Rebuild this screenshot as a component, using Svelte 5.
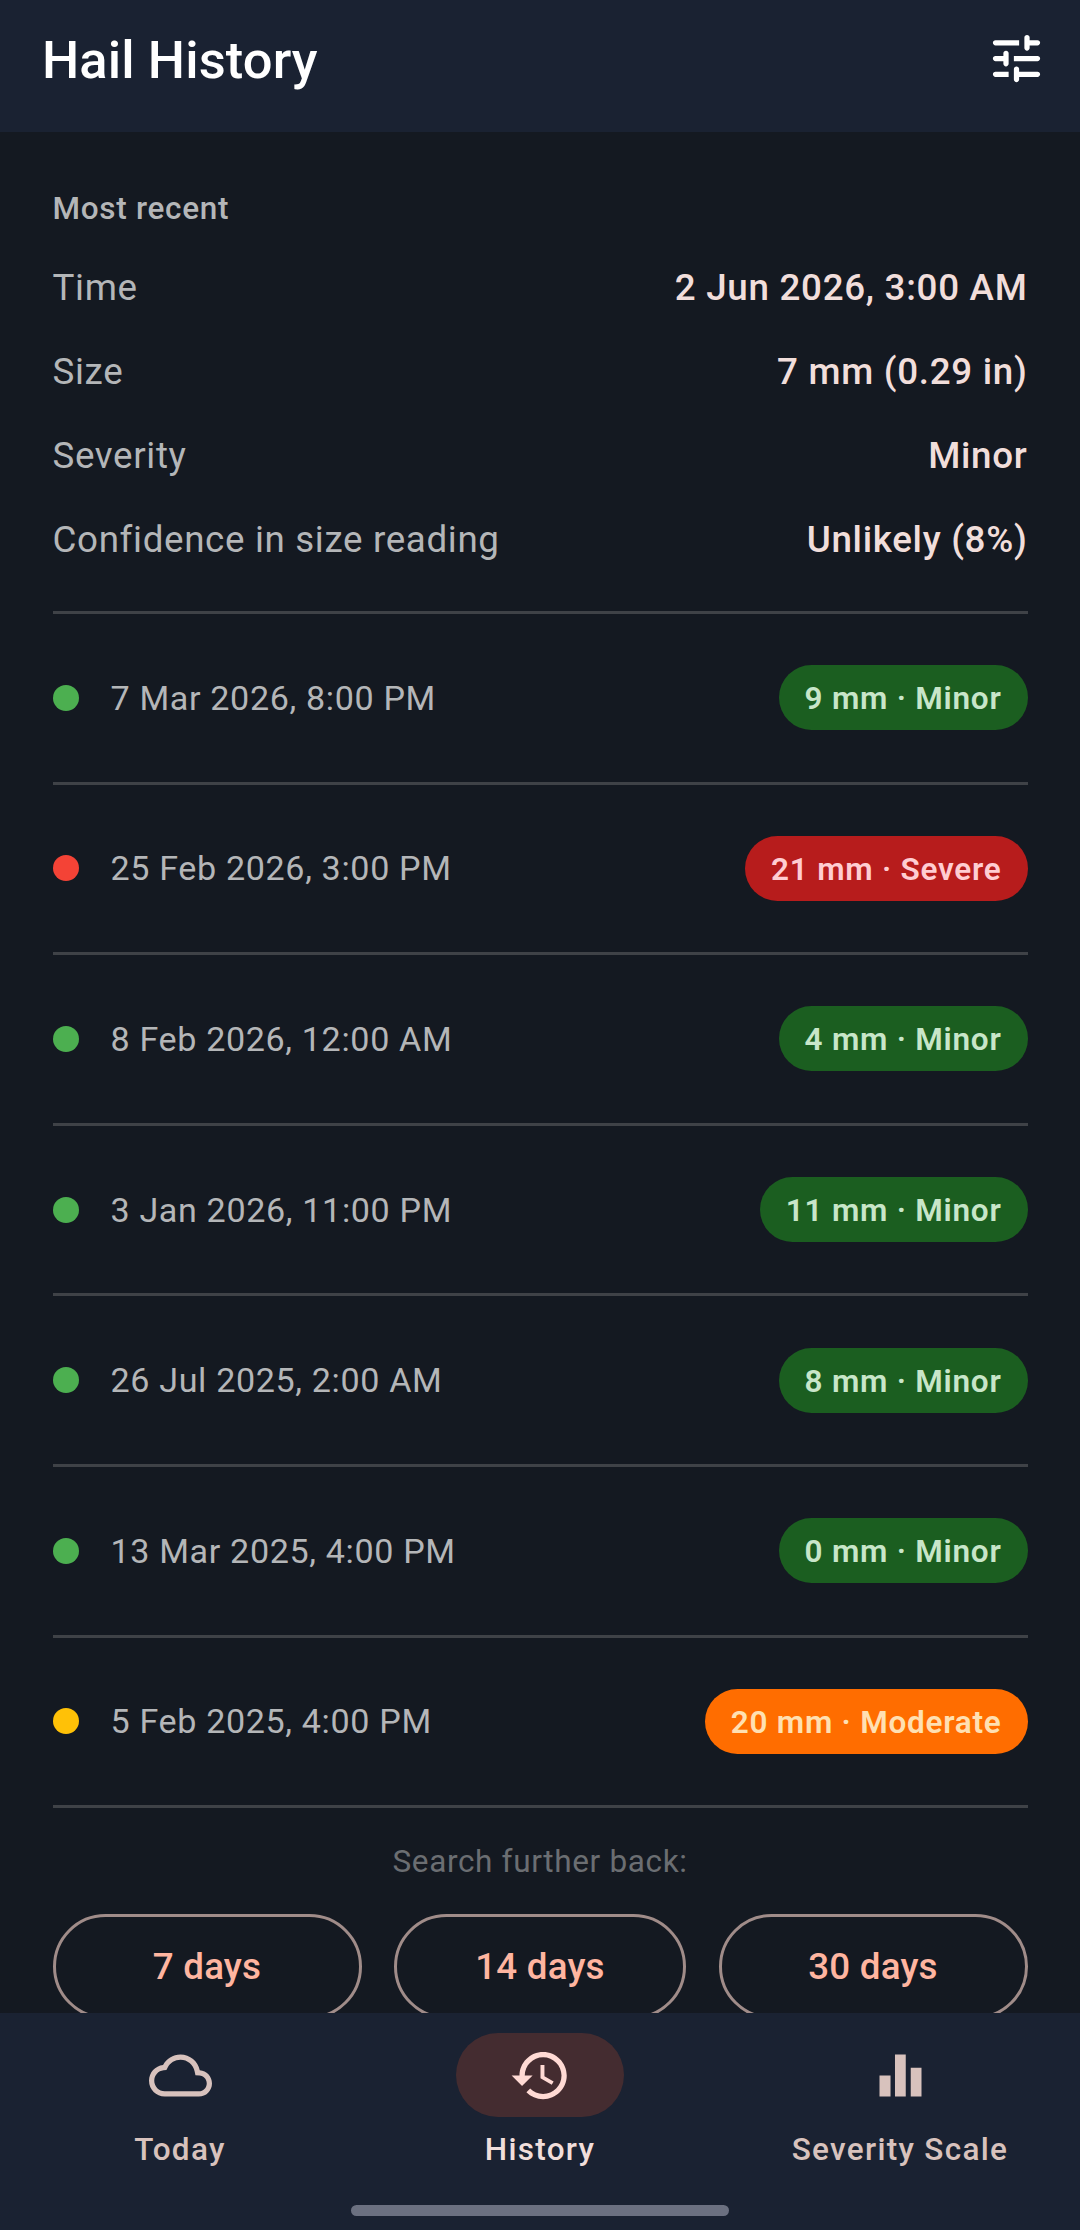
<script>
    const recent = [
        { label: 'Time', value: '2 Jun 2026, 3:00 AM' },
        { label: 'Size', value: '7 mm (0.29 in)' },
        { label: 'Severity', value: 'Minor' },
        { label: 'Confidence in size reading', value: 'Unlikely (8%)' }
    ];
    const events = [
        { date: '7 Mar 2026, 8:00 PM', tag: '9 mm · Minor', level: 'minor' },
        { date: '25 Feb 2026, 3:00 PM', tag: '21 mm · Severe', level: 'severe' },
        { date: '8 Feb 2026, 12:00 AM', tag: '4 mm · Minor', level: 'minor' },
        { date: '3 Jan 2026, 11:00 PM', tag: '11 mm · Minor', level: 'minor' },
        { date: '26 Jul 2025, 2:00 AM', tag: '8 mm · Minor', level: 'minor' },
        { date: '13 Mar 2025, 4:00 PM', tag: '0 mm · Minor', level: 'minor' },
        { date: '5 Feb 2025, 4:00 PM', tag: '20 mm · Moderate', level: 'moderate' }
    ];
    const ranges = ['7 days', '14 days', '30 days'];
</script>

<div class="screen">
    <header class="topbar">
        <h1 class="topbar__title">Hail History</h1>
        <svg class="icon" viewBox="0 0 24 24" fill="#fff">
            <path d="M3 18c0 .55.45 1 1 1h5v-2H4c-.55 0-1 .45-1 1zM3 6c0 .55.45 1 1 1h9V5H4c-.55 0-1 .45-1 1zm10 14v-1h7c.55 0 1-.45 1-1s-.45-1-1-1h-7v-1c0-.55-.45-1-1-1s-1 .45-1 1v4c0 .55.45 1 1 1s1-.45 1-1zM7 10v1H4c-.55 0-1 .45-1 1s.45 1 1 1h3v1c0 .55.45 1 1 1s1-.45 1-1v-4c0-.55-.45-1-1-1s-1 .45-1 1zm14 2c0-.55-.45-1-1-1h-9v2h9c.55 0 1-.45 1-1zm-5-3c.55 0 1-.45 1-1V7h3c.55 0 1-.45 1-1s-.45-1-1-1h-3V4c0-.55-.45-1-1-1s-1 .45-1 1v4c0 .55.45 1 1 1z" />
        </svg>
    </header>

    <main class="content">
        <h2 class="recent__title">Most recent</h2>
        {#each recent as row}
            <div class="recent__row">
                <span class="recent__label">{row.label}</span>
                <span class="recent__value">{row.value}</span>
            </div>
        {/each}

        <ul class="events">
            {#each events as event}
                <li class="event">
                    <span class="event__dot event__dot--{event.level}"></span>
                    <span class="event__date">{event.date}</span>
                    <span class="event__tag event__tag--{event.level}">{event.tag}</span>
                </li>
            {/each}
        </ul>

        <p class="further">Search further back:</p>
        <div class="ranges">
            {#each ranges as range}
                <button class="range">{range}</button>
            {/each}
        </div>
    </main>

    <nav class="nav">
        <div class="nav__items">
            <div class="nav__item">
                <span class="nav__icon">
                    <svg class="icon" viewBox="0 0 24 24" fill="#d8c2bd">
                        <path d="M12 6c2.62 0 4.88 1.86 5.39 4.43l.3 1.5 1.53.11c1.56.1 2.78 1.41 2.78 2.96 0 1.65-1.35 3-3 3H6c-2.21 0-4-1.79-4-4 0-2.05 1.53-3.76 3.56-3.97l1.07-.11.5-.95C8.08 7.14 9.94 6 12 6m0-2C9.11 4 6.6 5.64 5.35 8.04 2.34 8.36 0 10.91 0 14c0 3.31 2.69 6 6 6h13c2.76 0 5-2.24 5-5 0-2.64-2.05-4.78-4.65-4.96C18.67 6.59 15.64 4 12 4z" />
                    </svg>
                </span>
                <span class="nav__label">Today</span>
            </div>
            <div class="nav__item">
                <span class="nav__icon nav__icon--active">
                    <svg class="icon" viewBox="0 0 24 24" fill="#ffdad4">
                        <path d="M13 3c-4.97 0-9 4.03-9 9H1l3.89 3.89.07.14L9 12H6c0-3.87 3.13-7 7-7s7 3.13 7 7-3.13 7-7 7c-1.93 0-3.68-.79-4.94-2.06l-1.42 1.42C8.27 19.99 10.51 21 13 21c4.97 0 9-4.03 9-9s-4.03-9-9-9zm-1 5v5l4.28 2.54.72-1.21-3.5-2.08V8H12z" />
                    </svg>
                </span>
                <span class="nav__label nav__label--active">History</span>
            </div>
            <div class="nav__item">
                <span class="nav__icon">
                    <svg class="icon" viewBox="0 0 24 24" fill="#d8c2bd">
                        <path d="M4 12h4.200v8H4zM9.900 4H14v16H9.900zM15.900 9H20v11h-4.100z" />
                    </svg>
                </span>
                <span class="nav__label">Severity Scale</span>
            </div>
        </div>
        <div class="nav__handle"></div>
    </nav>
</div>

<style>
    :global(body) {
        margin: 0;
        background: #141921;
    }
    .screen {
        display: flex;
        flex-direction: column;
        height: 2230px;
        overflow: hidden;
        font-family: Roboto, "Liberation Sans", sans-serif;
        background: #141921;
    }
    .icon {
        display: block;
        width: 63px;
        height: 63px;
    }

    .topbar {
        flex: none;
        display: flex;
        align-items: center;
        justify-content: space-between;
        height: 132px;
        padding: 0 32px 13px 42px;
        box-sizing: border-box;
        background: #1a2232;
    }
    .topbar__title {
        margin: 0;
        font-size: 52.5px;
        font-weight: 500;
        letter-spacing: 0.1px;
        color: #fff;
    }
    .topbar .icon {
        margin-bottom: 2px;
    }

    .content {
        flex: 1;
        min-height: 0;
        overflow: hidden;
        padding: 51px 52.5px 0;
    }
    .recent__title {
        margin: 0;
        font-size: 31.5px;
        line-height: 52px;
        font-weight: 500;
        letter-spacing: 0.7px;
        color: #b4b6b8;
    }
    .recent__row {
        display: flex;
        justify-content: space-between;
        align-items: center;
        height: 84px;
        font-size: 36.75px;
    }
    .recent__row:nth-child(2) {
        margin-top: 10px;
    }
    .recent__label {
        color: #b4b6b8;
        letter-spacing: 0.65px;
    }
    .recent__value {
        font-weight: 500;
        color: #f1dedb;
        letter-spacing: 0.7px;
    }

    .events {
        list-style: none;
        margin: 30px 0 0;
        padding: 0;
        border-top: 3px solid #3f4247;
    }
    .event {
        display: flex;
        align-items: center;
        height: 167.6px;
        border-bottom: 3px solid #3f4247;
    }
    .event__dot {
        flex: none;
        width: 26px;
        height: 26px;
        border-radius: 50%;
        margin-right: 32px;
    }
    .event__dot--minor {
        background: #4caf50;
    }
    .event__dot--severe {
        background: #f44336;
    }
    .event__dot--moderate {
        background: #ffc107;
    }
    .event__date {
        flex: 1;
        font-size: 34.1px;
        letter-spacing: 0.65px;
        color: #b4b6b8;
    }
    .event__tag {
        height: 65px;
        line-height: 67px;
        padding: 0 26px;
        border-radius: 33px;
        font-size: 31.5px;
        font-weight: 600;
        letter-spacing: 0.75px;
    }
    .event__tag--minor {
        background: #1b5e20;
        color: #c8e6c9;
    }
    .event__tag--severe {
        background: #b71c1c;
        color: #ffcdd2;
    }
    .event__tag--moderate {
        background: #ff6d00;
        color: #ffe0b2;
    }

    .further {
        margin: 33px 0 0;
        text-align: center;
        font-size: 31.5px;
        line-height: 42px;
        letter-spacing: 0.65px;
        color: #6b6e72;
    }
    .ranges {
        display: grid;
        grid-template-columns: 309px 292px 309px;
        justify-content: space-between;
        margin-top: 31px;
    }
    .range {
        height: 105px;
        padding: 0;
        box-sizing: border-box;
        background: none;
        border: 3px solid #a08c89;
        border-radius: 53px;
        font-family: inherit;
        font-size: 36.75px;
        font-weight: 500;
        letter-spacing: 0.2px;
        color: #ffb5a0;
    }

    .nav {
        flex: none;
        position: relative;
        height: 217px;
        background: #1a2232;
    }
    .nav__items {
        display: grid;
        grid-template-columns: repeat(3, 1fr);
        padding-top: 20px;
    }
    .nav__item {
        display: flex;
        flex-direction: column;
        align-items: center;
    }
    .nav__icon {
        display: flex;
        justify-content: center;
        align-items: center;
        width: 168px;
        height: 84px;
        border-radius: 42px;
    }
    .nav__icon--active {
        background: #442c30;
    }
    .nav__label {
        margin-top: 12px;
        font-size: 31.5px;
        line-height: 42px;
        font-weight: 500;
        letter-spacing: 1.3px;
        color: #d8c2bd;
    }
    .nav__label--active {
        color: #f1dedb;
    }
    .nav__handle {
        position: absolute;
        left: 351px;
        bottom: 14px;
        width: 378px;
        height: 11px;
        border-radius: 6px;
        background: #6b7080;
    }
</style>
